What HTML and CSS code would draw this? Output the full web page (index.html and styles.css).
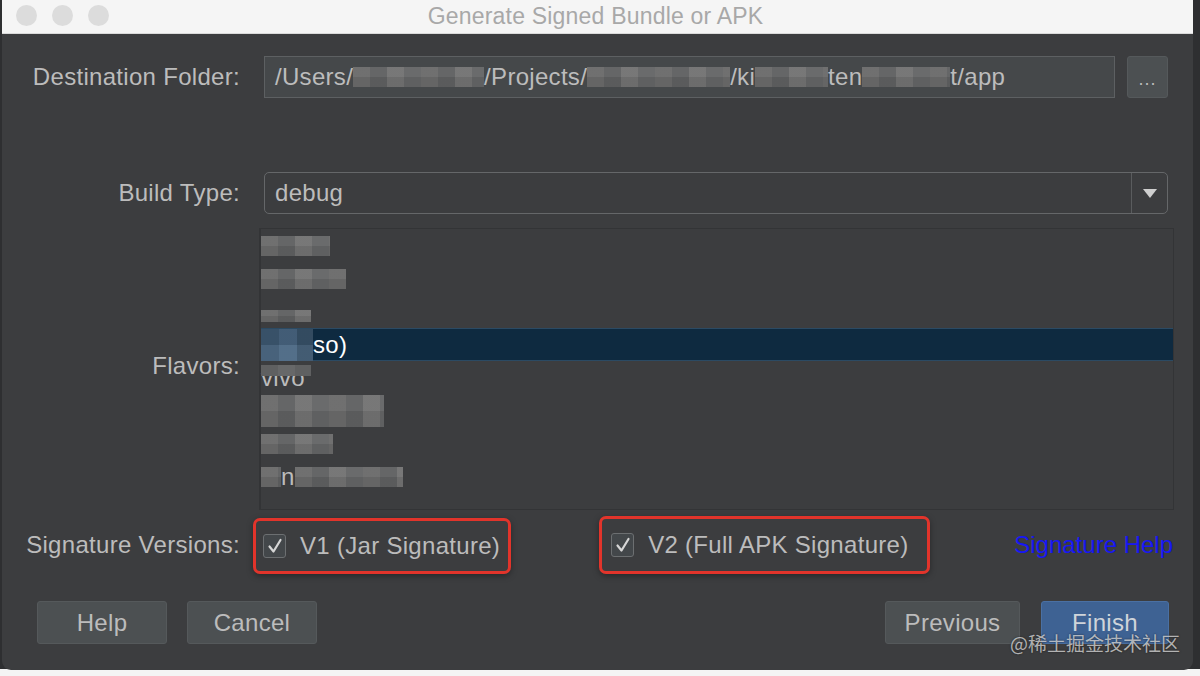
FILE: index.html
```html
<!DOCTYPE html>
<html lang="en">
<head>
    <meta charset="UTF-8">
    <title>Generate Signed Bundle or APK</title>
    <link rel="stylesheet" href="styles.css">
</head>
<body>
    <div class="window">
        <header class="titlebar">
            <div class="lights">
                <span class="light"></span>
                <span class="light"></span>
                <span class="light"></span>
            </div>
            <div class="title">Generate Signed Bundle or APK</div>
        </header>

        <div class="content">
            <div class="row row-dest">
                <label class="label">Destination Folder:</label>
                <div class="textfield">/Users/<span class="mosaic w131"></span>/Projects/<span class="mosaic w143"></span>/ki<span class="mosaic w73"></span>ten<span class="mosaic w88"></span>t/app</div>
                <button class="btn btn-more">...</button>
            </div>

            <div class="row row-build">
                <label class="label">Build Type:</label>
                <div class="combo">
                    <span class="combo-value">debug</span>
                    <span class="combo-arrow">
                        <svg width="16" height="11" viewBox="0 0 16 11"><path d="M1 1 H15 L8 10 Z" fill="#cfcfcf"/></svg>
                    </span>
                </div>
            </div>

            <div class="row row-flavors">
                <label class="label label-flavors">Flavors:</label>
                <ul class="flavors">
                    <li class="flavor"><span class="mosaic w69"></span></li>
                    <li class="flavor"><span class="mosaic w85"></span></li>
                    <li class="flavor"><span class="mosaic w50 thin"></span></li>
                    <li class="flavor selected"><span class="mosaic blue w52 tall"></span>so)</li>
                    <li class="flavor"><span class="veil">vivo</span></li>
                    <li class="flavor"><span class="mosaic w123 tall"></span></li>
                    <li class="flavor"><span class="mosaic w72"></span></li>
                    <li class="flavor"><span class="mosaic w20"></span>n<span class="mosaic w108"></span></li>
                </ul>
            </div>

            <div class="row row-sig">
                <label class="label">Signature Versions:</label>
                <div class="sig-options">
                    <label class="check check-v1">
                        <span class="box">
                            <svg width="18" height="18" viewBox="0 0 18 18"><path d="M3.5 9.5 L7.5 14.5 L14.5 3" fill="none" stroke="#d6d6d6" stroke-width="2.2" stroke-linecap="round" stroke-linejoin="round"/></svg>
                        </span>
                        V1 (Jar Signature)
                    </label>
                    <label class="check check-v2">
                        <span class="box">
                            <svg width="18" height="18" viewBox="0 0 18 18"><path d="M3.5 9.5 L7.5 14.5 L14.5 3" fill="none" stroke="#d6d6d6" stroke-width="2.2" stroke-linecap="round" stroke-linejoin="round"/></svg>
                        </span>
                        V2 (Full APK Signature)
                    </label>
                    <a class="help-link" href="#">Signature Help</a>
                </div>
            </div>

            <div class="buttons">
                <button class="btn btn-wide">Help</button>
                <button class="btn btn-wide">Cancel</button>
                <span class="spacer"></span>
                <button class="btn btn-prev">Previous</button>
                <button class="btn btn-finish">Finish</button>
            </div>
        </div>

        <div class="watermark">@稀土掘金技术社区</div>
    </div>
</body>
</html>
```

FILE: styles.css
```css
* {
    margin: 0;
    padding: 0;
    box-sizing: border-box;
}

:root {
    --window-bg: #3c3d3f;
    --text: #bcbcbc;
    --field-bg: #45484a;
    --field-border: #5d6062;
    --button-bg: #4c5052;
    --annotation: #e2342b;
}

body {
    width: 1200px;
    height: 676px;
    overflow: hidden;
    background: linear-gradient(to bottom, #2e2f31 0, #2e2f31 669px, #f4f4f4 669px);
    font-family: 'Liberation Sans', Arial, sans-serif;
    color: var(--text);
    letter-spacing: 0.3px;
}

.window {
    position: relative;
    width: 1191px;
    height: 670px;
    margin-left: 2px;
    background: var(--window-bg);
    border-radius: 0 0 9px 9px;
    overflow: hidden;
}

.titlebar {
    position: relative;
    height: 34px;
    background: #f5f5f5;
    border-bottom: 1px solid #dadada;
    display: flex;
    align-items: center;
    justify-content: center;
}

.lights {
    position: absolute;
    left: 14px;
    top: 5px;
    display: flex;
    gap: 15px;
}

.light {
    width: 21px;
    height: 21px;
    border-radius: 50%;
    background: #dcdcdc;
}

.title {
    font-size: 23px;
    color: #a8a8a8;
    letter-spacing: 0.2px;
    margin-left: -4px;
}

.content {
    padding-top: 22px;
}

.row {
    display: flex;
    align-items: center;
    padding-right: 25px;
}

.label {
    width: 238px;
    flex: none;
    margin-right: 24px;
    text-align: right;
    font-size: 24px;
    color: var(--text);
}

.textfield {
    flex: 1;
    height: 42px;
    display: flex;
    align-items: center;
    padding-left: 10px;
    background: var(--field-bg);
    border: 1px solid var(--field-border);
    font-size: 24px;
    white-space: nowrap;
}

.mosaic {
    display: inline-block;
    height: 20px;
    background:
        linear-gradient(to bottom, rgba(255,255,255,0.04) 0 50%, rgba(0,0,0,0.05) 50% 100%),
        repeating-linear-gradient(90deg, #6a6a6a 0 17px, #5f6061 17px 34px, #727272 34px 51px, #646566 51px 68px);
    vertical-align: middle;
}

.mosaic.thin {
    height: 12px;
    margin-top: 8px;
}

.mosaic.tall {
    height: 32px;
}

.mosaic.blue {
    background:
        linear-gradient(to bottom, rgba(0,0,0,0.1) 0 50%, rgba(255,255,255,0.05) 50% 100%),
        repeating-linear-gradient(90deg, #3e5a74 0 18px, #4a6783 18px 36px, #39536b 36px 54px);
}

.w20 { width: 20px; }
.w50 { width: 50px; }
.w52 { width: 52px; }
.w69 { width: 69px; }
.w72 { width: 72px; }
.w73 { width: 73px; }
.w85 { width: 85px; }
.w88 { width: 88px; }
.w108 { width: 108px; }
.w123 { width: 123px; }
.w131 { width: 131px; }
.w143 { width: 143px; }

.btn {
    font-family: inherit;
    font-size: 24px;
    letter-spacing: 0.3px;
    color: var(--text);
    background: var(--button-bg);
    border: 1px solid #55595b;
    border-radius: 3px;
    height: 43px;
}

.btn-more {
    width: 41px;
    height: 42px;
    margin-left: 12px;
    font-size: 18px;
    letter-spacing: 1px;
    padding-top: 4px;
}

.row-build {
    margin-top: 74px;
}

.combo {
    flex: 1;
    height: 42px;
    display: flex;
    border: 1px solid #656769;
    border-radius: 5px;
}

.combo-value {
    flex: 1;
    display: flex;
    align-items: center;
    padding-left: 10px;
    font-size: 24px;
}

.combo-arrow {
    width: 36px;
    border-left: 1px solid #5a5c5e;
    display: flex;
    align-items: center;
    justify-content: center;
}

.row-flavors {
    margin-top: 14px;
}

.label-flavors {
    margin-bottom: 6px;
}

.flavors {
    list-style: none;
    flex: 1;
    height: 282px;
    margin-left: -5px;
    margin-right: -6px;
    border: 1px solid #333436;
    border-left-width: 2px;
    background: #3c3d3f;
}

.flavor {
    height: 33px;
    display: flex;
    align-items: center;
    font-size: 24px;
    white-space: nowrap;
}

.flavor.selected {
    background: #0e2a40;
    border-top: 1px solid #2b4a63;
    border-bottom: 1px solid #2b4a63;
    color: #ffffff;
}

.veil {
    position: relative;
}

.veil::before {
    content: "";
    position: absolute;
    left: 0;
    top: 1px;
    width: 50px;
    height: 11px;
    background: repeating-linear-gradient(90deg, #5f6061 0 17px, #676869 17px 34px);
}

.row-sig {
    margin-top: 6px;
}

.sig-options {
    flex: 1;
    display: flex;
    align-items: center;
}

.check {
    display: flex;
    align-items: center;
    gap: 14px;
    height: 56px;
    font-size: 24px;
    color: var(--text);
    border: 3px solid var(--annotation);
    border-radius: 7px;
    box-shadow: 0 2px 6px rgba(0, 0, 0, 0.35);
}

.check-v1 {
    margin-left: -11px;
    padding: 0 8px 0 7px;
    margin-top: 2px;
}

.check-v2 {
    margin-left: 88px;
    padding: 0 18px 0 9px;
    height: 58px;
}

.box {
    width: 23px;
    height: 24px;
    display: flex;
    align-items: center;
    justify-content: center;
    border: 1px solid #6c6f71;
    border-radius: 3px;
    background: #43474a;
}

.help-link {
    margin-left: auto;
    margin-right: -5px;
    font-size: 24px;
    letter-spacing: 0;
    color: #1717f5;
    text-decoration: none;
}

.buttons {
    display: flex;
    gap: 20px;
    margin-top: 27px;
    padding: 0 24px 0 35px;
}

.spacer {
    flex: 1;
}

.btn-wide {
    width: 130px;
}

.btn-prev {
    width: 135px;
}

.btn-finish {
    width: 128px;
    margin-left: 1px;
    background: #3e6293;
    border-color: #4a70a3;
    color: #cfd4da;
}

.watermark {
    position: absolute;
    right: 13px;
    bottom: 14px;
    font-family: 'Noto Sans CJK SC', 'Liberation Sans', sans-serif;
    font-size: 19px;
    letter-spacing: 0;
    color: rgba(225, 225, 225, 0.75);
    text-shadow: 0 0 2px rgba(0, 0, 0, 0.6);
}
```
